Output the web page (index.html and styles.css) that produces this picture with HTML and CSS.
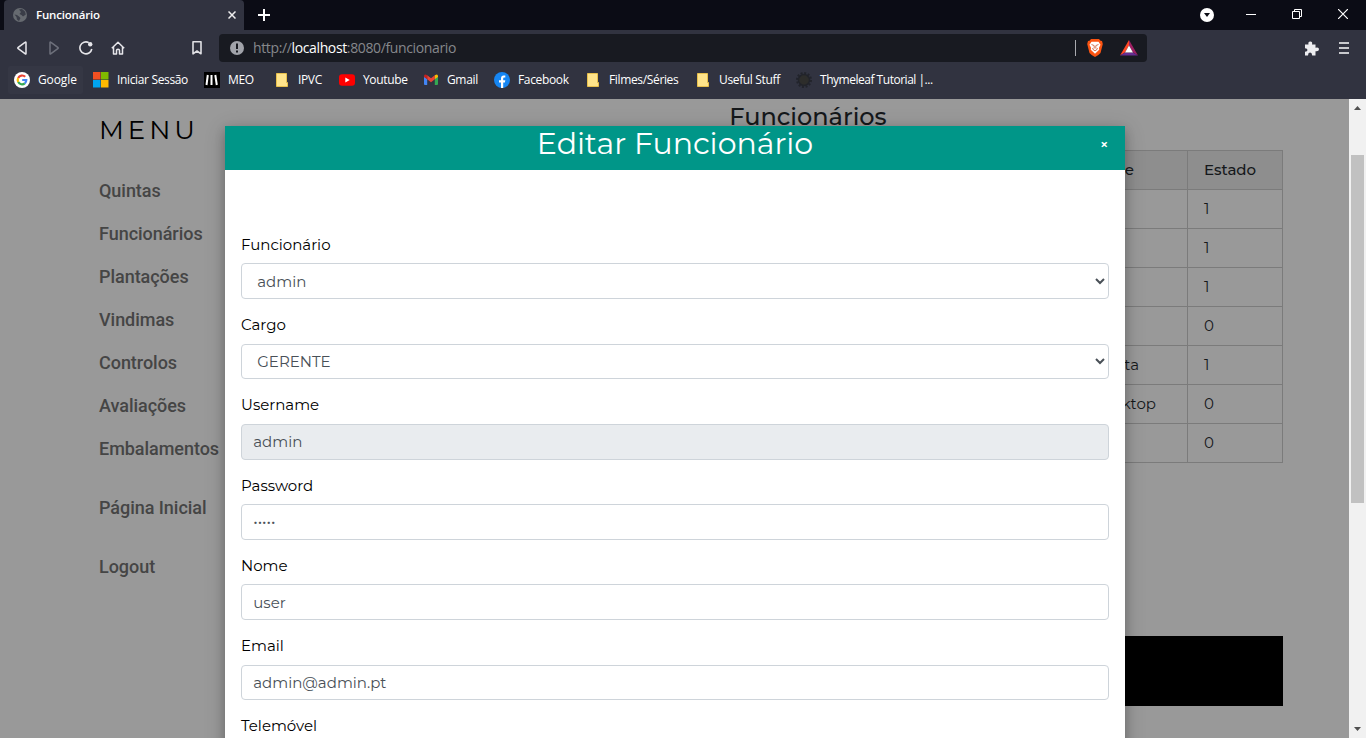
FILE: index.html
```html
<!DOCTYPE html>
<html lang="pt">
<head>
<meta charset="utf-8">
<title>Funcionário</title>
<link rel="stylesheet" href="styles.css">
</head>
<body>
<header class="browser">
  <div class="tabstrip">
    <div class="tab">
      <svg class="tab-icon" width="14" height="14" viewBox="0 0 14 14"><circle cx="7" cy="7" r="7" fill="#666a70"/><path d="M1.500 6.500l2.500.5 2 1.500L7.500 10 6 13l-2-1.500L3.500 9zM6 1.500L9 1l3 2.500.8 3L10 8.500 8.500 7l-2-1 1.500-2z" fill="#3a3d48"/></svg>
      <span class="tab-title">Funcionário</span>
      <svg class="tab-close" width="8" height="8" viewBox="0 0 8 8"><path d="M.5.5l7 7M7.500.5l-7 7" stroke="#eee" stroke-width="1.5"/></svg>
    </div>
    <svg class="new-tab" width="12" height="12" viewBox="0 0 12 12"><path d="M6 0v12M0 6h12" stroke="#fff" stroke-width="2"/></svg>
    <div class="window-buttons">
      <svg width="14" height="14" viewBox="0 0 14 14"><circle cx="7" cy="7" r="7" fill="#fff"/><path d="M4 5h6L7 9z" fill="#0b0c15"/></svg>
      <svg width="10" height="10" viewBox="0 0 10 10"><path d="M0 5.500h10" stroke="#fff"/></svg>
      <svg width="10" height="10" viewBox="0 0 10 10"><path d="M.5 2.500h7v7h-7zM2.500 2.500v-2h7v7h-2" fill="none" stroke="#fff"/></svg>
      <svg width="10" height="10" viewBox="0 0 10 10"><path d="M0 0l10 10M10 0L0 10" stroke="#fff" stroke-width="1.200"/></svg>
    </div>
  </div>
  <div class="toolbar">
    <div class="nav">
      <svg width="12" height="14" viewBox="0 0 12 14"><path d="M10 1.500v11q0 1-1 .2L2.200 7.600q-.8-.6 0-1.200L9 1.300q1-.8 1 .2z" fill="none" stroke="#e6e6ea" stroke-width="1.500"/></svg>
      <svg width="12" height="14" viewBox="0 0 12 14"><path d="M2 1.500v11q0 1 1 .2L9.800 7.600q.8-.6 0-1.200L3 1.300q-1-.8-1 .2z" fill="none" stroke="#6d707b" stroke-width="1.500"/></svg>
      <svg width="14" height="14" viewBox="0 0 14 14"><path d="M9.800 1.600A6 6 0 1 0 12.800 8" fill="none" stroke="#e6e6ea" stroke-width="1.600"/><circle cx="11.200" cy="3.200" r="2.200" fill="#e6e6ea"/></svg>
      <svg width="14" height="14" viewBox="0 0 14 14"><path d="M.8 7.200L7 1.200l6.200 6M2.500 6v7h3V9.500q0-1.300 1.500-1.300t1.500 1.300V13h3V6" fill="none" stroke="#e6e6ea" stroke-width="1.500" stroke-linejoin="round"/></svg>
      <svg class="nav-bookmark" width="10" height="14" viewBox="0 0 10 14"><path d="M1 .8h8v12L5 10l-4 2.800z" fill="none" stroke="#e0e0e4" stroke-width="1.600" stroke-linejoin="round"/></svg>
    </div>
    <div class="address">
      <svg class="address-info" width="14" height="14" viewBox="0 0 14 14"><circle cx="7" cy="7" r="7" fill="#a1a3aa"/><path d="M7 2.500v5.500M7 9.500v2" stroke="#181a21" stroke-width="2"/></svg>
      <span class="address-text">http://<b>localhost</b>:8080/funcionario</span>
      <div class="address-end">
        <i class="address-rule"></i>
        <svg width="16" height="18" viewBox="0 0 16 18"><path d="M4 0h8l1.500 1.700L15 2l.8 3L13.500 14Q12 16 8 18 4 16 2.500 14L.2 5 1 2l1.500-.3z" fill="#fb5412"/><path d="M4.500 2.800h7l2 3-1.500 3 .2 2L8 14.800 3.800 10.800l.2-2-1.500-3z" fill="#fff"/><path d="M4.500 5.500l2.500 1M11.500 5.500l-2.500 1M7.200 6.500v3M8.800 6.500v3M5.500 9l1 2 1.500.7 1.500-.7 1-2" fill="none" stroke="#c9562e" stroke-width=".8"/></svg>
        <svg width="18" height="16" viewBox="0 0 18 16"><path d="M9 0v5.500L5 12.500 0 15.500z" fill="#ff4724"/><path d="M9 0l9 15.500-5-3-4-7z" fill="#9e1f63"/><path d="M0 15.500l5-3h8l5 3z" fill="#662d91"/><path d="M9 5.500l4 7H5z" fill="#fff"/></svg>
      </div>
    </div>
    <div class="tools">
      <svg width="15" height="15" viewBox="0 0 15 15"><path d="M1 3.500h3.500Q3.800.5 6.300.5T8 3.500h3.500v3.200Q15 5.700 15 8.200t-3.500 2v4.300H8.200Q8 11.500 6 11.600T4 14.500H1V10.700Q3.500 10.500 3.500 9T1 7.200z" fill="#ededf0"/></svg>
      <svg width="10" height="12" viewBox="0 0 10 12"><path d="M0 1h10M0 6h10M0 11h10" stroke="#c8c9cd" stroke-width="2"/></svg>
    </div>
  </div>
  <nav class="bookmarks">
    <a class="mark mark-hot"><svg width="16" height="16" viewBox="0 0 16 16"><circle cx="8" cy="8" r="8" fill="#fff"/><g fill="none" stroke-width="2.200"><path d="M11.200 4.800A4.300 4.300 0 0 0 4.200 6" stroke="#ea4335"/><path d="M4.200 6a4.300 4.300 0 0 0 0 4" stroke="#fbbc05"/><path d="M4.200 10a4.300 4.300 0 0 0 6.600 1.300" stroke="#34a853"/><path d="M10.800 11.300A4.300 4.300 0 0 0 12.300 8H8.200" stroke="#4285f4"/></g></svg><span>Google</span></a>
    <a class="mark"><svg width="16" height="16" viewBox="0 0 16 16"><path d="M0 0h7.500v7.500H0z" fill="#f25022"/><path d="M8 0h7.500v7.500H8z" fill="#7fba00"/><path d="M0 8h7.500v7.500H0z" fill="#00a4ef"/><path d="M8 8h7.500v7.500H8z" fill="#ffb900"/></svg><span>Iniciar Sessão</span></a>
    <a class="mark"><svg width="16" height="16" viewBox="0 0 16 16"><path d="M0 0h16v16H0z" fill="#000"/><path d="M3.800 3L2.500 13M7.500 3v10M11.300 3l1.500 10" stroke="#fff" stroke-width="2"/></svg><span>MEO</span></a>
    <a class="mark"><svg width="16" height="16" viewBox="0 0 16 16"><path d="M2.500 1.500h10v9h1v4h-11z" fill="#ffe48b" stroke="#e8c04c"/></svg><span>IPVC</span></a>
    <a class="mark"><svg width="16" height="16" viewBox="0 0 16 16"><rect y="2.200" width="16" height="11.600" rx="3" fill="#f00"/><path d="M6.300 5.500v5L10.700 8z" fill="#fff"/></svg><span>Youtube</span></a>
    <a class="mark"><svg width="16" height="16" viewBox="0 0 16 16"><path d="M1 4.500l3.200 2.400V13H2q-1 0-1-1z" fill="#4285f4"/><path d="M15 4.500l-3.200 2.400V13H14q1 0 1-1z" fill="#34a853"/><path d="M4.200 3.300L8 6.200l3.800-2.900v4L8 10.200 4.200 7.300z" fill="#ea4335"/><path d="M1 4.200q0-2.700 3.200-.9v4L1 5z" fill="#c5221f"/><path d="M15 4.200q0-2.700-3.200-.9v4L15 5z" fill="#fbbc04"/></svg><span>Gmail</span></a>
    <a class="mark"><svg width="16" height="16" viewBox="0 0 16 16"><circle cx="8" cy="8" r="8" fill="#1686f3"/><path d="M7 16v-5.500H5V8.200h2V6.500Q7 3.600 9.700 3.600h1.600v2H10Q9.200 5.600 9.200 6.600v1.600h2.100l-.4 2.300H9.200V16z" fill="#fff"/></svg><span>Facebook</span></a>
    <a class="mark"><svg width="16" height="16" viewBox="0 0 16 16"><path d="M2.500 1.500h10v9h1v4h-11z" fill="#ffe48b" stroke="#e8c04c"/></svg><span>Filmes/Séries</span></a>
    <a class="mark"><svg width="16" height="16" viewBox="0 0 16 16"><path d="M2.500 1.500h10v9h1v4h-11z" fill="#ffe48b" stroke="#e8c04c"/></svg><span>Useful Stuff</span></a>
    <a class="mark mark-long"><svg width="16" height="16" viewBox="0 0 16 16"><circle cx="8" cy="8" r="5.500" fill="#2d2d2b" stroke="#22242b" stroke-width="1.500"/><circle cx="8" cy="8" r="7" fill="none" stroke="#22242b" stroke-width="2" stroke-dasharray="2 1.665"/></svg><span>Thymeleaf Tutorial |...</span></a>
  </nav>
</header>

<main class="viewport">
  <div class="page">
    <aside class="sidebar">
      <h2 class="menu-title">MENU</h2>
      <a class="menu-link">Quintas</a>
      <a class="menu-link">Funcionários</a>
      <a class="menu-link">Plantações</a>
      <a class="menu-link">Vindimas</a>
      <a class="menu-link">Controlos</a>
      <a class="menu-link">Avaliações</a>
      <a class="menu-link">Embalamentos</a>
      <a class="menu-link menu-apart">Página Inicial</a>
      <a class="menu-link menu-apart">Logout</a>
    </aside>
    <section class="content">
      <h1 class="content-title">Funcionários</h1>
      <table class="staff">
        <thead><tr><th></th><th class="name name-head">Nome</th><th>Estado</th></tr></thead>
        <tbody>
          <tr><td></td><td class="name"></td><td>1</td></tr>
          <tr><td></td><td class="name"></td><td>1</td></tr>
          <tr><td></td><td class="name"></td><td>1</td></tr>
          <tr><td></td><td class="name"></td><td>0</td></tr>
          <tr><td></td><td class="name name-short">ta</td><td>1</td></tr>
          <tr><td></td><td class="name name-long">ktop</td><td>0</td></tr>
          <tr><td></td><td class="name"></td><td>0</td></tr>
        </tbody>
      </table>
      <footer class="footer"></footer>
    </section>
  </div>
  <div class="scrollbar">
    <svg width="7" height="4" viewBox="0 0 7 4"><path d="M0 4L3.500 0 7 4z" fill="#505050"/></svg>
    <i class="thumb"></i>
    <svg width="7" height="4" viewBox="0 0 7 4"><path d="M0 0l3.500 4L7 0z" fill="#505050"/></svg>
  </div>
  <div class="modal">
    <div class="modal-head">
      <h2 class="modal-title">Editar Funcionário</h2>
      <span class="modal-close">×</span>
    </div>
    <form class="form">
      <label class="label">Funcionário</label>
      <select class="control"><option>admin</option></select>
      <label class="label">Cargo</label>
      <select class="control"><option>GERENTE</option></select>
      <label class="label">Username</label>
      <input class="control" value="admin" disabled>
      <label class="label">Password</label>
      <input class="control" type="password" value="admin">
      <label class="label">Nome</label>
      <input class="control" value="user">
      <label class="label">Email</label>
      <input class="control" value="admin@admin.pt">
      <label class="label">Telemóvel</label>
      <input class="control">
    </form>
  </div>
</main>
</body>
</html>
```
FILE: styles.css
```css
* { box-sizing: border-box; }
body { margin: 0; width: 1366px; height: 738px; overflow: hidden; font-family: Montserrat, Inter, "Liberation Sans", sans-serif; font-size: 15px; }
svg { display: block; flex: none; }

.browser { height: 99px; background: #313340; font-family: "Open Sans", "Noto Sans", sans-serif; font-size: 12px; color: #fff; }
.tabstrip { height: 30px; background: #0b0c15; display: flex; align-items: center; padding-left: 4px; }
.tab { width: 240px; height: 30px; background: #313340; border-radius: 4px 4px 0 0; display: flex; align-items: center; padding: 0 8px 0 9px; gap: 9px; }
.tab-title { font-weight: 600; font-size: 11.5px; line-height: 14px; letter-spacing: -.18px; flex: 1; }
.new-tab { margin-left: 14px; }
.window-buttons { margin-left: auto; display: flex; align-items: center; gap: 36px; padding-right: 18px; }
.window-buttons svg:first-child { margin-right: -4px; }
.window-buttons svg:not(:first-child) { margin-bottom: 2px; }

.toolbar { height: 36px; display: flex; align-items: center; }
.nav { width: 219px; padding-left: 16px; display: flex; align-items: center; gap: 19px; }
.nav svg:nth-child(2) { margin-left: 1px; }
.nav svg:nth-child(4) { margin-left: -1px; }
.nav-bookmark { margin-left: 48px; }
.address { width: 928px; height: 28px; background: #181a21; border-radius: 4px; display: flex; align-items: center; padding: 0 9px 0 11px; }
.address-text { margin-left: 9px; margin-top: -1px; font-size: 14px; letter-spacing: -.37px; color: #86888c; }
.address-text b { font-weight: 400; color: #fff; }
.address-end { margin-left: auto; display: flex; align-items: center; gap: 17px; }
.address-rule { width: 1px; height: 16px; background: #a9aaaf; margin-right: -6px; }
.tools { margin-left: auto; padding-right: 17px; display: flex; align-items: center; gap: 20px; }

.bookmarks { height: 33px; padding: 0 0 5px 14px; display: grid; align-items: center; grid-template-columns: 79px 111px 70px 65px 84px 71px 91px 110px 101px auto; }
.mark { display: flex; align-items: center; gap: 8px; white-space: nowrap; letter-spacing: -.35px; }
.mark span { margin-top: -1px; }
.mark-hot { height: 28px; margin: 0 10px 0 -6px; padding-left: 6px; border-radius: 2px; background: #353744; letter-spacing: -.1px; }
.mark-long { letter-spacing: -.48px; }

.viewport { position: relative; height: 639px; display: flex; background: #999; overflow: hidden; }
.page { width: 1349px; display: flex; }
.sidebar { width: 333px; padding: 10px 0 0 99px; display: flex; flex-direction: column; }
.menu-title { margin: 0 0 25px; font-size: 26px; line-height: 43px; font-weight: 400; letter-spacing: 4px; color: #000; }
.menu-link { font: 500 18px/27px Roboto, sans-serif; letter-spacing: -.04px; margin-bottom: 16px; color: #454545; }
.menu-apart { margin-top: 16px; }
.content { width: 950px; display: flex; flex-direction: column; }
.content-title { margin: 3px 0 18px; font-size: 24px; line-height: 30px; font-weight: 500; text-align: center; color: #15181b; }
.staff { width: 950px; table-layout: fixed; border-collapse: collapse; color: #15181b; }
.staff th, .staff td { height: 39px; padding: 0 0 2px 16px; border: 1px solid #7b7b7b; text-align: left; font-weight: 400; }
.staff th { background: #8e8e8e; font-weight: 500; width: 95px; }
.staff th:first-child { width: auto; }
.staff th.name { width: 120px; }
.staff .name { text-align: right; }
.staff .name-head { padding-right: 53px; }
.staff .name-short { padding-right: 48px; }
.staff .name-long { padding-right: 31px; }
.footer { height: 70px; margin-top: 173px; background: #000; }

.scrollbar { width: 17px; background: #f1f1f1; display: flex; flex-direction: column; align-items: center; justify-content: space-between; padding: 7px 0; }
.thumb { width: 13px; height: 348px; background: #c1c1c1; margin-bottom: 179px; }

.modal { position: absolute; left: 225px; top: 27px; width: 900px; height: 900px; background: #fff; box-shadow: 0 4px 10px rgba(0,0,0,.2), 0 4px 20px rgba(0,0,0,.19); }
.modal-head { position: relative; height: 44px; background: #009688; color: #fff; }
.modal-title { margin: 0; font-size: 30px; line-height: 35px; font-weight: 400; text-align: center; }
.modal-close { position: absolute; right: 17px; top: 8px; font: 700 13px/20px "Open Sans", sans-serif; }
.form { padding: 63.75px 16px 0; display: flex; flex-direction: column; }
.label { height: 22px; line-height: 22px; margin-bottom: 7.5px; color: #000; }
.control { height: 35.75px; margin: 0 0 15px; padding: 0 11.25px; border: 1px solid #ced4da; border-radius: 4px; background: #fff; color: #495057; font: 400 15px Montserrat, Inter, sans-serif; }
select.control { padding-right: 12.25px; }
.control:disabled { background: #e9ecef; }
```
